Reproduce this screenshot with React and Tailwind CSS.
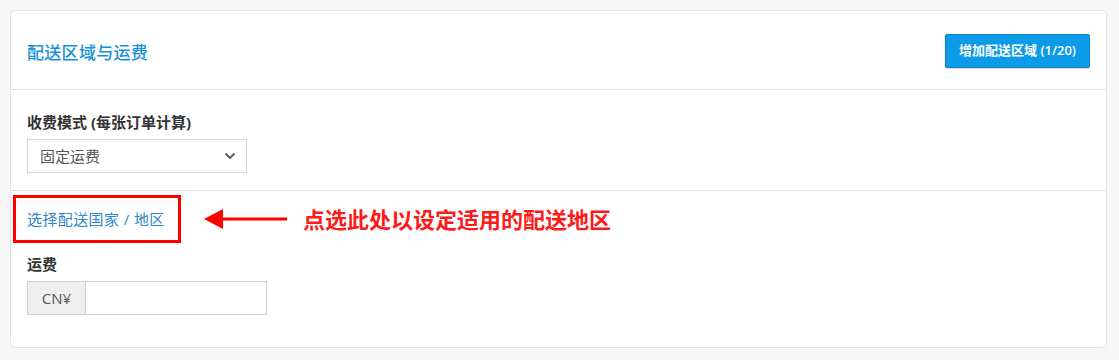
import React from "react";

export default function App() {
  const font = { fontFamily: '"Open Sans", "Noto Sans CJK SC", sans-serif' };
  return (
    <div className="w-[1119px] h-[360px] bg-[#f7f7f7] pt-[10px] pl-[10px]" style={font}>
      <div className="w-[1097px] h-[338px] bg-white border border-[#e3e3e3] rounded-[5px] flex flex-col">
        {/* header */}
        <div className="h-[79px] flex items-center justify-between pl-[16px] pr-[16px] border-b border-[#e1e1e1] shrink-0">
          <div className="text-[17px] font-medium tracking-[0.3px] text-[#1591dc] leading-none mt-[4px]">配送区域与运费</div>
          <button className="h-[34px] px-[13px] bg-[#0b9be8] border border-[#0a84cc] rounded-[2px] text-white text-[13px] font-semibold shadow-[0_1px_1px_rgba(0,0,0,0.15)] mt-[2px]">
            增加配送区域 (1/20)
          </button>
        </div>
        {/* section 1 */}
        <div className="pl-[16px] pt-[22px] pb-[17px] border-b border-[#e1e1e1]">
          <div className="text-[15px] font-bold text-[#333] leading-[20px]">收费模式 (每张订单计算)</div>
          <div className="mt-[7px] w-[220px] h-[34px] border border-[#d6d6d6] flex items-center justify-between pl-[12px] pr-[10px]">
            <span className="text-[15px] text-[#555]">固定运费</span>
            <svg width="12" height="8" viewBox="0 0 12 8" fill="none">
              <path d="M1.5 1.5 L6 6 L10.5 1.5" stroke="#555" strokeWidth="1.8" />
            </svg>
          </div>
        </div>
        {/* section 2 */}
        <div className="pt-[4px] pl-[2px]">
          <div className="flex items-center">
            <div className="w-[168px] h-[48px] border-[3px] border-[#ff0000] flex items-center pl-[11px]">
              <span className="text-[15px] tracking-[0.4px] text-[#2d86c9]">选择配送国家 / 地区</span>
            </div>
            <svg className="ml-[23px]" width="84" height="22" viewBox="0 0 84 22">
              <polygon points="0,11 19,1 19,21" fill="#ff0000" />
              <rect x="17" y="9.5" width="66" height="3" fill="#ff0000" />
            </svg>
            <span className="ml-[15px] text-[22px] font-bold text-[#ff1a1a] leading-none">点选此处以设定适用的配送地区</span>
          </div>
          <div className="pl-[14px]">
            <div className="mt-[11px] text-[15px] font-bold text-[#333] leading-[20px]">运费</div>
            <div className="mt-[7px] w-[240px] h-[34px] border border-[#cfcfcf] flex">
              <div className="w-[58px] bg-[#eeeeee] border-r border-[#cfcfcf] flex items-center justify-center text-[15px] text-[#555]">CN¥</div>
              <div className="flex-1 bg-white"></div>
            </div>
          </div>
        </div>
      </div>
    </div>
  );
}
